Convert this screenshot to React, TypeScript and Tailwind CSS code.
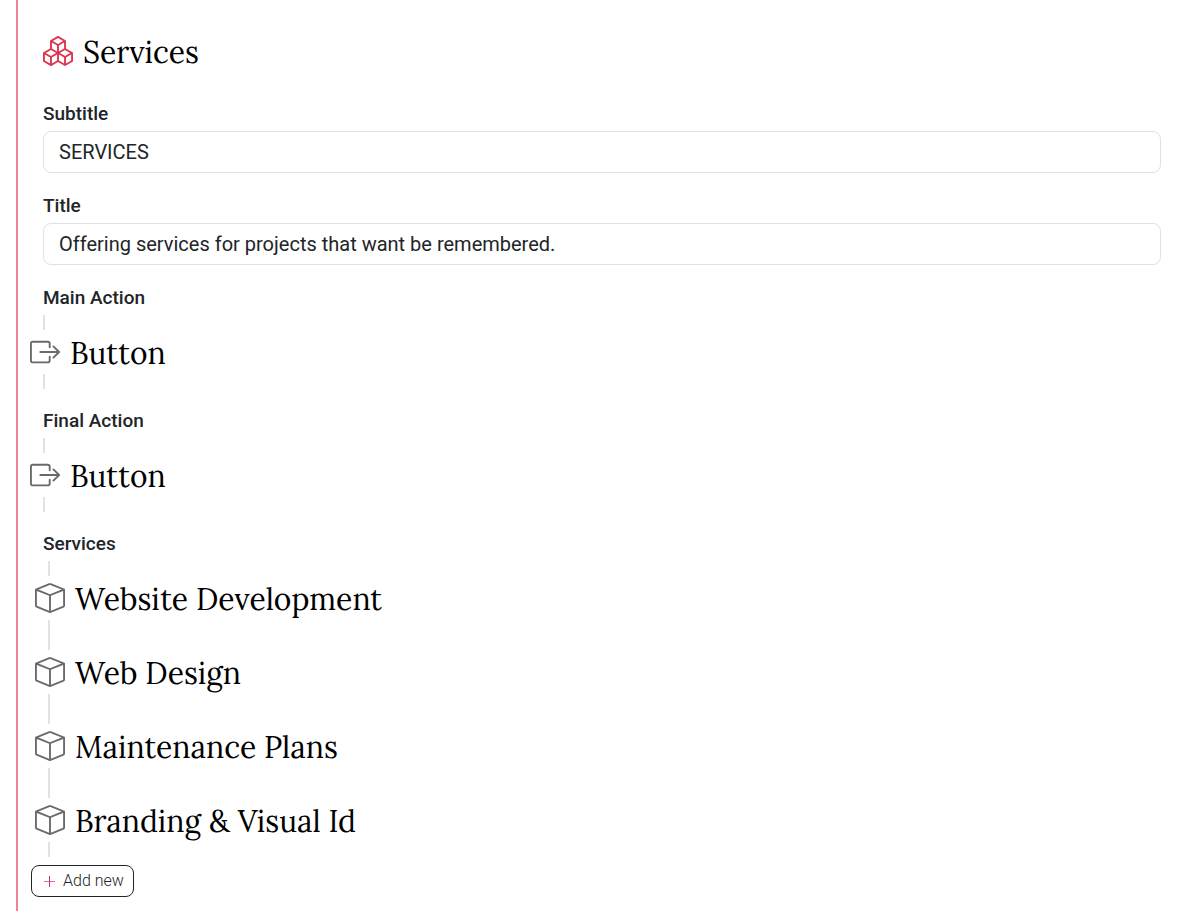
import { BsBox, BsBoxArrowRight, BsBoxes } from "react-icons/bs";

const services = [
  "Website Development",
  "Web Design",
  "Maintenance Plans",
  "Branding & Visual Id",
];

const actions = ["Main Action", "Final Action"];

function Field({ id, label, value }: { id: string; label: string; value: string }) {
  return (
    <div className="mb-5 flex flex-col gap-[5px]">
      <label htmlFor={id} className="text-[19px] leading-6 font-medium">
        {label}
      </label>
      <input
        id={id}
        type="text"
        defaultValue={value}
        className="mb-px h-[42px] w-full rounded-lg border border-[#dee2e6] bg-white px-[15px] text-xl leading-6 outline-none focus:border-[#e9899b]"
      />
    </div>
  );
}

function Connector({ tall = false }: { tall?: boolean }) {
  return <div className={tall ? "h-[30px] w-0.5 bg-[#e2e2e2]" : "h-[15px] w-0.5 bg-[#e2e2e2]"} />;
}

function BlockTitle({ children }: { children: string }) {
  return (
    <span className="pt-0.5 font-['Lora','Liberation_Serif',serif] text-[30px] leading-10 text-black">
      {children}
    </span>
  );
}

export default function App() {
  return (
    <main className="min-h-screen bg-white pl-4 font-[Roboto,sans-serif] text-[#212529]">
      <section className="min-h-screen border-l-2 border-[#ee8597] pt-[29px] pr-[38px] pb-3.5 pl-[25px]">
        <h1 className="mb-[29px] flex h-11 items-center gap-2.5">
          <BsBoxes className="size-[30px] text-[#dc3550]" aria-hidden="true" />
          <BlockTitle>Services</BlockTitle>
        </h1>

        <Field id="subtitle" label="Subtitle" value="SERVICES" />
        <Field id="title" label="Title" value="Offering services for projects that want be remembered." />

        {actions.map((action) => (
          <div key={action} className="mb-5">
            <h2 className="mb-[5px] text-[19px] leading-6 font-medium">{action}</h2>
            <Connector />
            <button type="button" className="-ml-[13px] flex h-11 cursor-pointer items-center gap-2.5">
              <BsBoxArrowRight className="size-[30px] text-[#6a6a6e]" aria-hidden="true" />
              <BlockTitle>Button</BlockTitle>
            </button>
            <Connector />
          </div>
        ))}

        <h2 className="mb-[5px] text-[19px] leading-6 font-medium">Services</h2>
        <ul>
          {services.map((service, index) => (
            <li key={service}>
              {index === 0 && (
                <div className="pl-[5px]">
                  <Connector />
                </div>
              )}
              <button type="button" className="-ml-2 flex h-11 cursor-pointer items-center gap-2.5">
                <BsBox className="size-[30px] text-[#6a6a6e]" aria-hidden="true" />
                <BlockTitle>{service}</BlockTitle>
              </button>
              <div className="pl-[5px]">
                <Connector tall={index < services.length - 1} />
              </div>
            </li>
          ))}
        </ul>

        <button
          type="button"
          className="mt-2 -ml-3 flex h-8 cursor-pointer items-center gap-[7px] rounded-lg border border-[#212529] pr-[9px] pl-[11px] text-base font-light"
        >
          <svg viewBox="0 0 13 13" className="size-[13px]" aria-hidden="true">
            <rect x="1" y="6" width="11" height="1" fill="#dd6fa8" />
            <rect x="6" y="1" width="1" height="11" fill="#c92a7d" />
          </svg>
          Add new
        </button>
      </section>
    </main>
  );
}
